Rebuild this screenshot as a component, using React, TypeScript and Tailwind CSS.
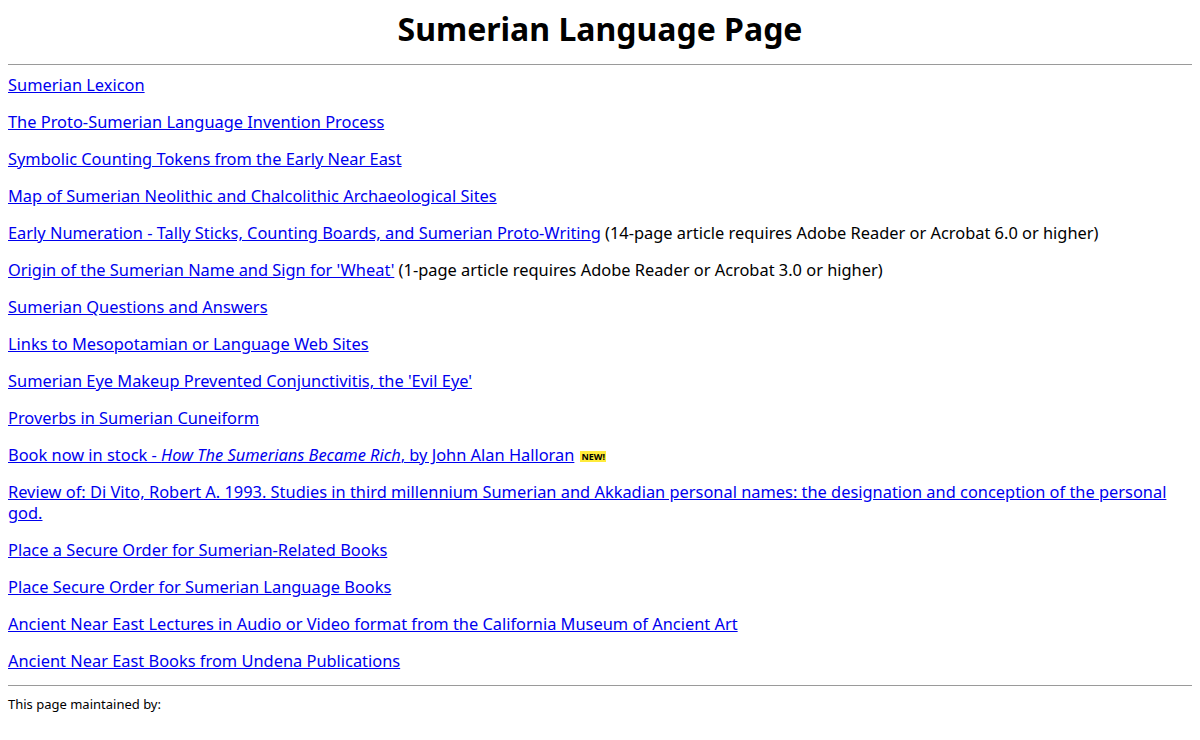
const links: { text: React.ReactNode; note?: string; isNew?: boolean }[] = [
  { text: 'Sumerian Lexicon' },
  { text: 'The Proto-Sumerian Language Invention Process' },
  { text: 'Symbolic Counting Tokens from the Early Near East' },
  { text: 'Map of Sumerian Neolithic and Chalcolithic Archaeological Sites' },
  {
    text: 'Early Numeration - Tally Sticks, Counting Boards, and Sumerian Proto-Writing',
    note: '(14-page article requires Adobe Reader or Acrobat 6.0 or higher)',
  },
  {
    text: "Origin of the Sumerian Name and Sign for 'Wheat'",
    note: '(1-page article requires Adobe Reader or Acrobat 3.0 or higher)',
  },
  { text: 'Sumerian Questions and Answers' },
  { text: 'Links to Mesopotamian or Language Web Sites' },
  { text: "Sumerian Eye Makeup Prevented Conjunctivitis, the 'Evil Eye'" },
  { text: 'Proverbs in Sumerian Cuneiform' },
  {
    text: (
      <>
        Book now in stock - <i>How The Sumerians Became Rich</i>, by John Alan Halloran
      </>
    ),
    isNew: true,
  },
  {
    text: 'Review of: Di Vito, Robert A. 1993. Studies in third millennium Sumerian and Akkadian personal names: the designation and conception of the personal god.',
  },
  { text: 'Place a Secure Order for Sumerian-Related Books' },
  { text: 'Place Secure Order for Sumerian Language Books' },
  { text: 'Ancient Near East Lectures in Audio or Video format from the California Museum of Ancient Art' },
  { text: 'Ancient Near East Books from Undena Publications' },
]

export default function App() {
  return (
    <div className="m-2 bg-white text-black" style={{ fontFamily: '"Noto Sans", sans-serif' }}>
      <h1 className="mt-[6px] mb-[14px] text-center text-[32px] font-bold leading-[42px]">Sumerian Language Page</h1>
      <hr className="border-t border-[#9a9a9a]" />
      <div className="mt-[9px]">
        {links.map((l, i) => (
          <p key={i} className="mb-[16px] text-[16.4px] leading-[21px]">
            <a href="#" className="text-[#0000ee] underline">
              {l.text}
            </a>
            {l.note && <span> {l.note}</span>}
            {l.isNew && (
              <span className="ml-[6px] inline-block bg-[#ffeb3b] px-[1px] align-middle text-[9px] font-bold leading-[11px] text-black">
                NEW!
              </span>
            )}
          </p>
        ))}
      </div>
      <hr className="-mt-[2px] border-t border-[#9a9a9a]" />
      <p className="mt-[10px] text-[13px] leading-[17px]">This page maintained by:</p>
    </div>
  )
}
